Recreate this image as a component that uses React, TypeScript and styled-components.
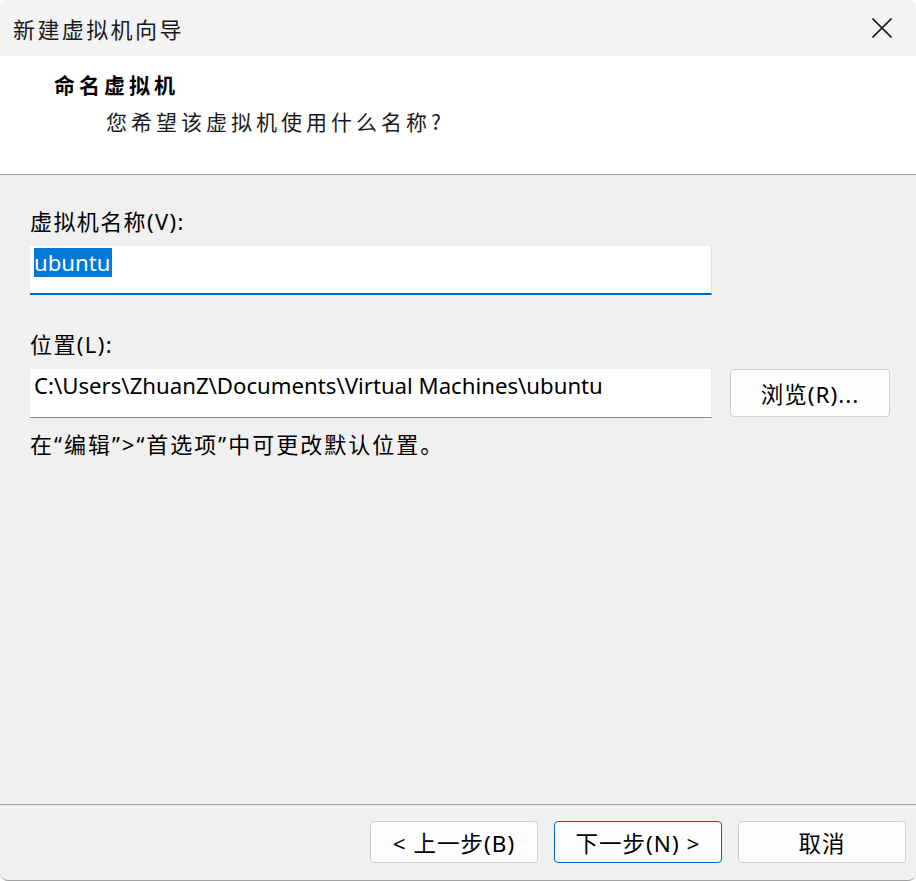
import React from "react";
import styled, { createGlobalStyle } from "styled-components";

const Global = createGlobalStyle`
  html, body { margin: 0; padding: 0; background: #ffffff; }
  * { box-sizing: border-box; }
`;

const FONT = `"Noto Sans", "Noto Sans CJK SC", sans-serif`;
const CJK = `"Noto Sans CJK SC", "Noto Sans", sans-serif`;

const Window = styled.div`
  width: 916px;
  height: 881px;
  display: flex;
  flex-direction: column;
  background: #f0f0f0;
  border-radius: 8px;
  border-bottom: 1px solid #a0a0a0;
  overflow: hidden;
  font-family: ${FONT};
  color: #000;
`;

const TitleBar = styled.div`
  height: 56px;
  flex: none;
  display: flex;
  align-items: center;
  justify-content: space-between;
  background: #f3f3f3;
  padding: 0 14px 0 13px;
`;

const TitleText = styled.div`
  font-family: ${CJK};
  font-size: 22px;
  letter-spacing: 2.4px;
  color: #1a1a1a;
`;

const CloseButton = styled.button`
  width: 40px;
  height: 40px;
  border: none;
  background: transparent;
  display: flex;
  align-items: center;
  justify-content: center;
  padding: 0;
`;

const Header = styled.div`
  height: 119px;
  flex: none;
  background: #ffffff;
  border-bottom: 1px solid #a0a0a0;
  display: flex;
  flex-direction: column;
  padding: 11px 0 0 54px;
`;

const HeaderTitle = styled.div`
  font-family: ${CJK};
  font-size: 21px;
  font-weight: 700;
  letter-spacing: 4px;
  line-height: 34px;
`;

const HeaderSub = styled.div`
  font-family: ${CJK};
  font-size: 21px;
  letter-spacing: 4px;
  line-height: 36px;
  margin-top: 2px;
  padding-left: 52px;
  color: #1a1a1a;
`;

const Body = styled.div`
  flex: 1;
  display: flex;
  flex-direction: column;
  padding: 30px 26px 0 30px;
`;

const Label = styled.div<{ $top?: number }>`
  font-size: 22px;
  line-height: 32px;
  letter-spacing: 1.4px;
  margin-top: ${(p) => p.$top ?? 0}px;
  margin-bottom: 9px;
`;

const Row = styled.div`
  display: flex;
  align-items: flex-start;
  gap: 18px;
`;

const Field = styled.div<{ $focused?: boolean }>`
  width: 682px;
  height: 49px;
  flex: none;
  background: #ffffff;
  border-right: 1px solid ${(p) => (p.$focused ? "#e1e1e1" : "#ececec")};
  border-bottom: ${(p) => (p.$focused ? "2px solid #0067c0" : "1px solid #8a8a8a")};
  padding: 2px 0 0 4px;
  font-size: 22.2px;
  line-height: 29px;
  white-space: nowrap;
`;

const Selected = styled.span`
  background: #0078d7;
  color: #ffffff;
  display: inline-block;
  padding: 0 1px 0 0;
`;

const Button = styled.button<{ $primary?: boolean; $w?: number; $h?: number }>`
  width: ${(p) => p.$w ?? 168}px;
  height: ${(p) => p.$h ?? 42}px;
  flex: none;
  background: #fdfdfd;
  border: 1px solid ${(p) => (p.$primary ? "#0067c0" : "#d0d0d0")};
  border-radius: 4px;
  font-family: ${FONT};
  font-size: 22.5px;
  color: #000;
  padding: 0;
  letter-spacing: 1px;
`;

const Hint = styled.div`
  margin-top: 10px;
  font-family: ${FONT};
  font-size: 22px;
  line-height: 32px;
  letter-spacing: 2px;
`;

const Footer = styled.div`
  height: 76px;
  flex: none;
  border-top: 1px solid #a0a0a0;
  display: flex;
  justify-content: flex-end;
  align-items: flex-start;
  gap: 16px;
  padding: 16px 10px 0 0;
`;

function CloseIcon() {
  return (
    <svg width="20" height="20" viewBox="0 0 20 20">
      <path d="M0.5 0.5 L19.5 19.5 M19.5 0.5 L0.5 19.5" stroke="#1a1a1a" strokeWidth="1.6" fill="none" />
    </svg>
  );
}

export default function App() {
  return (
    <>
      <Global />
      <Window>
        <TitleBar>
          <TitleText>新建虚拟机向导</TitleText>
          <CloseButton aria-label="关闭">
            <CloseIcon />
          </CloseButton>
        </TitleBar>
        <Header>
          <HeaderTitle>命名虚拟机</HeaderTitle>
          <HeaderSub>您希望该虚拟机使用什么名称?</HeaderSub>
        </Header>
        <Body>
          <Label>虚拟机名称(V):</Label>
          <Field $focused>
            <Selected>ubuntu</Selected>
          </Field>
          <Label $top={33}>位置(L):</Label>
          <Row>
            <Field>C:\Users\ZhuanZ\Documents\Virtual Machines\ubuntu</Field>
            <Button $w={160} $h={48}>浏览(R)...</Button>
          </Row>
          <Hint>在“编辑”&gt;“首选项”中可更改默认位置。</Hint>
        </Body>
        <Footer>
          <Button>&lt; 上一步(B)</Button>
          <Button $primary>下一步(N) &gt;</Button>
          <Button>取消</Button>
        </Footer>
      </Window>
    </>
  );
}
